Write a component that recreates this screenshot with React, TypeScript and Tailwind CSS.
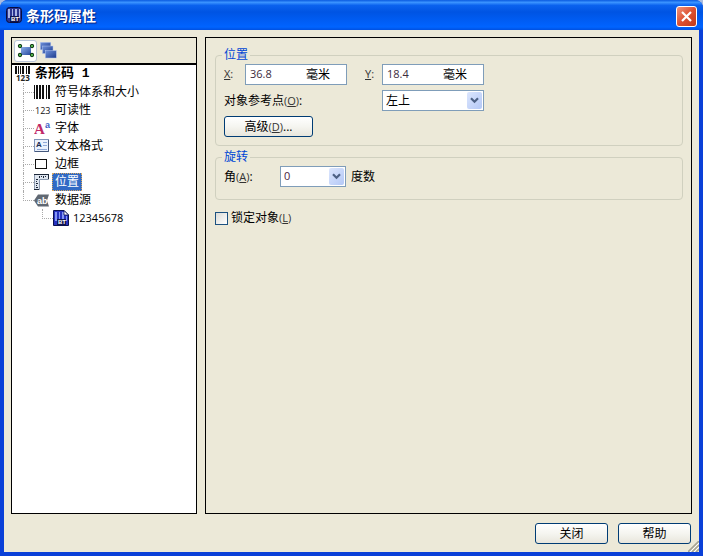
import { useState, type ReactNode } from "react"
import clsx from "clsx"

const UI_FONT = "font-['Open_Sans','Noto_Sans_CJK_SC',sans-serif]"

function BarTenderIcon({ page = false }: { page?: boolean }) {
    return (
        <svg width="16" height="16" viewBox="0 0 16 16" aria-hidden="true" className="shrink-0">
            {page ? (
                <path d="M0.5 0.5H11L15.5 5V15.5H0.5Z" fill="#2733c0" stroke="#0a1050" />
            ) : (
                <rect x="0.5" y="0.5" width="15" height="15" rx="3" fill="#2a3490" stroke="#080c3c" />
            )}
            <path d="M2 2h2v9h-2zM6 2h1v7h-1zM9 2h2v7h-2zM13 6h1v5h-1z" fill={page ? "#8496f4" : "#a9b4e4"} />
            {page ? (
                <path d="M11 0.5V5H15.5Z" fill="#fff" stroke="#0a1050" strokeWidth="0.8" />
            ) : (
                <path d="M13 2h1v4h-1z" fill="#a9b4e4" />
            )}
            <rect x="4" y="9" width="9" height="6" fill="#101450" />
            <text x="5" y="14" fontSize="6" fontWeight="bold" fill="#fff" fontFamily="Liberation Sans, sans-serif">
                BT
            </text>
        </svg>
    )
}

function ObjectIcon() {
    return (
        <svg width="18" height="14" viewBox="0 0 18 14" aria-hidden="true">
            <defs>
                <linearGradient id="objectFill" x1="0" y1="0" x2="1" y2="1">
                    <stop offset="0" stopColor="#8fb0ec" />
                    <stop offset="1" stopColor="#24479c" />
                </linearGradient>
            </defs>
            <path d="M4 3h10v8h-10z" fill="url(#objectFill)" />
            {[[3, 2], [15, 2], [3, 11], [15, 11]].map(([x, y]) => (
                <circle key={`${x}-${y}`} cx={x} cy={y} r="1.6" fill="#5ccc58" stroke="#123c18" strokeWidth="1.1" />
            ))}
        </svg>
    )
}

function StackIcon() {
    return (
        <svg width="17" height="17" viewBox="0 0 17 17" aria-hidden="true">
            <defs>
                <linearGradient id="stackFill" x1="0" y1="0" x2="1" y2="1">
                    <stop offset="0" stopColor="#6f92dc" />
                    <stop offset="1" stopColor="#1c3a8c" />
                </linearGradient>
            </defs>
            <g fill="url(#stackFill)" stroke="#b4c6ee" strokeWidth="0.5">
                <rect x="0.3" y="0.3" width="10.5" height="7.5" />
                <rect x="2.5" y="4" width="10.5" height="7.5" />
                <rect x="5.3" y="8.5" width="11" height="7.5" />
            </g>
        </svg>
    )
}

function RootIcon() {
    return (
        <svg width="17" height="16" viewBox="0 0 17 16" aria-hidden="true" className="shrink-0">
            <path d="M1 0h2v8h-2zM4 0h1v8h-1zM6 0h1v8h-1zM8 0h2v8h-2zM12 0h1v8h-1zM14 0h2v8h-2z" fill="#111" />
            <text x="2" y="15" fontSize="8" fontWeight="bold" fill="#222" fontFamily="Open Sans, sans-serif">
                123
            </text>
        </svg>
    )
}

function BarsIcon() {
    return (
        <svg width="16" height="14" viewBox="0 0 16 14" aria-hidden="true">
            <path d="M0 0h1v14h-1zM2 0h2v14h-2zM5 0h2v14h-2zM8 0h2v14h-2zM12 0h1v14h-1zM14 0h2v14h-2z" fill="#111" />
        </svg>
    )
}

function DigitsIcon() {
    return (
        <svg width="18" height="14" viewBox="0 0 18 14" aria-hidden="true" className="shrink-0">
            <text x="1" y="11" fontSize="9" fill="#111" fontFamily="Open Sans, sans-serif">
                123
            </text>
        </svg>
    )
}

function FontIcon() {
    return (
        <svg width="18" height="18" viewBox="0 0 18 18" aria-hidden="true" className="shrink-0">
            <text x="0" y="15" fontSize="15" fontWeight="bold" fill="#c02868" fontFamily="Liberation Serif, serif">
                A
            </text>
            <text x="11" y="9" fontSize="9" fontWeight="bold" fill="#3f62c8" fontFamily="Liberation Sans, sans-serif">
                a
            </text>
        </svg>
    )
}

function TextFormatIcon() {
    return (
        <svg width="16" height="14" viewBox="0 0 16 14" aria-hidden="true">
            <rect x="0.5" y="0.5" width="14" height="12" fill="#eaf1fc" stroke="#7f93b8" />
            <path d="M1 12.5H14.5V1" fill="none" stroke="#44587c" />
            <path d="M9 3.5h4M9 6.5h4M3 10.5h10" stroke="#8fa9d8" />
            <text x="2" y="8" fontSize="8" fontWeight="bold" fill="#1c2c50" fontFamily="Liberation Sans, sans-serif">
                A
            </text>
        </svg>
    )
}

function BorderIcon() {
    return (
        <svg width="16" height="14" viewBox="0 0 16 14" aria-hidden="true">
            <rect x="1.5" y="2.5" width="11" height="9" fill="#fff" stroke="#111" />
        </svg>
    )
}

function RulerIcon() {
    return (
        <svg width="16" height="16" viewBox="0 0 16 16" aria-hidden="true">
            <path d="M0.5 0.5H14.5V5.5H5.5V15.5H0.5Z" fill="#dfe6f0" stroke="#8b99ae" />
            <path d="M0 0.5H15M14.5 0V5M0 15.5H5" stroke="#1c2738" />
            <path d="M5.5 2v2M7.5 2v1M9.5 2v2M11.5 2v1M2 5.5h2M2 7.5h1M2 9.5h2M2 11.5h1M2 13.5h2" stroke="#1c2738" />
        </svg>
    )
}

function DataIcon() {
    return (
        <svg width="16" height="13" viewBox="0 0 16 13" aria-hidden="true">
            <path d="M4 0.5H15L13 6.5L15 12.5H4L0 6.5Z" fill="#606872" />
            <text x="3" y="10" fontSize="9" fontWeight="bold" fill="#fff" fontFamily="Liberation Sans, sans-serif">
                ab
            </text>
        </svg>
    )
}

interface TreeEntry {
    name: string
    icon: ReactNode
}

const entries: TreeEntry[] = [
    { name: "符号体系和大小", icon: <BarsIcon /> },
    { name: "可读性", icon: <DigitsIcon /> },
    { name: "字体", icon: <FontIcon /> },
    { name: "文本格式", icon: <TextFormatIcon /> },
    { name: "边框", icon: <BorderIcon /> },
    { name: "位置", icon: <RulerIcon /> },
    { name: "数据源", icon: <DataIcon /> },
]

function Branch({ last = false }: { last?: boolean }) {
    return (
        <span className="flex flex-col w-[11px] h-full shrink-0" aria-hidden="true">
            <span className="h-[10px] border-l border-b border-dotted border-[#aaa]" />
            {!last && <span className="flex-1 border-l border-dotted border-[#aaa]" />}
        </span>
    )
}

function ObjectTree() {
    const [selected, setSelected] = useState("位置")

    return (
        <ul>
            <li className="flex items-center gap-1 h-[18px] pl-[2px] text-[13px] font-bold">
                <RootIcon />
                <span className="font-['Liberation_Mono','Noto_Sans_CJK_SC',monospace]">条形码 1</span>
            </li>
            {entries.map((entry, i) => (
                <li key={entry.name} className="flex items-center h-[18px] pl-[11px]">
                    <Branch last={i === entries.length - 1} />
                    <span className="flex items-center w-[18px] shrink-0">{entry.icon}</span>
                    <button
                        onClick={() => setSelected(entry.name)}
                        className={clsx(
                            "h-[18px] px-[2px] border border-dotted leading-[16px]",
                            selected === entry.name ? "bg-[#316ac5] text-white border-[#d8a860]" : "border-transparent"
                        )}
                    >
                        {entry.name}
                    </button>
                </li>
            ))}
            <li className="flex items-center h-[18px] pl-[30px]">
                <Branch last />
                <BarTenderIcon page />
                <button className="pl-1 text-[11px]">12345678</button>
            </li>
        </ul>
    )
}

function DropArrow() {
    return (
        <span className="absolute right-[2px] inset-y-[2px] w-[15px] flex items-center justify-center rounded-[2px] bg-gradient-to-br from-[#dce6fd] to-[#b4c8f6] pointer-events-none">
            <svg width="9" height="7" viewBox="0 0 9 7" aria-hidden="true">
                <path d="M1 1.2L4.5 4.7L8 1.2" fill="none" stroke="#4d6185" strokeWidth="2.2" />
            </svg>
        </span>
    )
}

function Combo({ id, options, className }: { id: string; options: string[]; className: string }) {
    return (
        <span className={clsx("relative h-[21px]", className)}>
            <select id={id} className="appearance-none block w-full h-full pl-[3px] bg-white border border-[#7f9db9] outline-none">
                {options.map((option) => (
                    <option key={option}>{option}</option>
                ))}
            </select>
            <DropArrow />
        </span>
    )
}

function Measure({ id, value }: { id: string; value: string }) {
    return (
        <span className="flex items-center w-[102px] h-[21px] bg-white border border-[#7f9db9]">
            <input id={id} defaultValue={value} className="w-[60px] pl-1 text-[11px] text-[#3c2c3c] outline-none" />
            <span>毫米</span>
        </span>
    )
}

function Group({ title, className, children }: { title: string; className: string; children: ReactNode }) {
    return (
        <fieldset className={clsx("border border-[#d0d0bf] rounded-[4px] px-2", className)}>
            <legend className="-ml-[2px] px-[2px] leading-[12px] text-[#0046d5]">{title}</legend>
            {children}
        </fieldset>
    )
}

function Key({ children }: { children: string }) {
    return (
        <span className="text-[11px] text-[#333]">
            (<u className="underline-offset-1">{children}</u>)
        </span>
    )
}

function PushButton({ className, children }: { className: string; children: ReactNode }) {
    return (
        <button
            className={clsx(
                "h-[21px] leading-[18px] border border-[#003c74] rounded-[3px] bg-gradient-to-b from-white via-[#f5f5f0] to-[#e8e6dc]",
                className
            )}
        >
            {children}
        </button>
    )
}

export default function App() {
    return (
        <div className="min-h-screen flex bg-[#a9bce0]">
            <div className={clsx("flex-1 flex flex-col bg-[#0a40d8] rounded-t-[8px] text-[12px] text-black", UI_FONT)}>
                <header className="flex items-center h-[30px] px-[6px] rounded-t-[8px] bg-[linear-gradient(to_bottom,#0a5be0_0%,#3a93ff_8%,#0a62ee_18%,#0054e3_40%,#0060fa_80%,#0064ff_90%,#0050e0_100%)]">
                    <BarTenderIcon />
                    <h1 className="flex-1 pl-[4px] text-[14px] font-bold text-white [text-shadow:1px_1px_1px_#0a1f78]">条形码属性</h1>
                    <button
                        aria-label="关闭窗口"
                        className="flex items-center justify-center w-[21px] h-[21px] mt-[3px] rounded-[3px] border border-white bg-gradient-to-br from-[#f0937a] via-[#dc5030] to-[#c03a18]"
                    >
                        <svg width="11" height="11" viewBox="0 0 11 11" aria-hidden="true">
                            <path d="M1 1L10 10M10 1L1 10" stroke="#fff" strokeWidth="2.2" />
                        </svg>
                    </button>
                </header>

                <div className="relative flex-1 flex flex-col mx-1 mb-1 pt-[7px] px-[7px] pb-2 bg-[#ece9d8]">
                    <div className="flex-1 flex gap-2">
                        <nav className="w-[186px] shrink-0 border border-black bg-white">
                            <div className="flex items-center gap-[3px] h-[27px] pl-[2px] bg-[#ece9d8] border-b-2 border-black">
                                <button
                                    aria-label="对象"
                                    className="flex items-center justify-center w-[23px] h-[22px] rounded-[3px] border border-[#b8c4d8] bg-white"
                                >
                                    <ObjectIcon />
                                </button>
                                <button aria-label="图层">
                                    <StackIcon />
                                </button>
                            </div>
                            <ObjectTree />
                        </nav>

                        <main className="flex-1 min-w-0 border border-black pt-[11px] pl-[9px] pr-2">
                            <Group title="位置" className="pt-[3px] pb-2">
                                <div className="flex flex-col gap-[5px]">
                                    <div className="flex items-center">
                                        <label htmlFor="pos-x" className="w-[21px] text-[11px] text-[#333]">
                                            <u>X</u>:
                                        </label>
                                        <Measure id="pos-x" value="36.8" />
                                        <label htmlFor="pos-y" className="w-[35px] pl-[18px] text-[11px] text-[#333]">
                                            <u>Y</u>:
                                        </label>
                                        <Measure id="pos-y" value="18.4" />
                                    </div>
                                    <div className="flex items-center">
                                        <label htmlFor="anchor" className="w-[158px]">
                                            对象参考点<Key>O</Key>:
                                        </label>
                                        <Combo id="anchor" options={["左上", "右上", "左下", "右下"]} className="w-[102px]" />
                                    </div>
                                    <PushButton className="w-[89px]">
                                        高级<Key>D</Key>...
                                    </PushButton>
                                </div>
                            </Group>

                            <Group title="旋转" className="mt-[5px] pt-[3px] pb-3">
                                <div className="flex items-center">
                                    <label htmlFor="angle" className="w-[56px]">
                                        角<Key>A</Key>:
                                    </label>
                                    <Combo id="angle" options={["0", "90", "180", "270"]} className="w-[66px] text-[11px] text-[#4c1c3c]" />
                                    <span className="pl-[5px]">度数</span>
                                </div>
                            </Group>

                            <label className="flex items-center gap-[3px] mt-[9px]">
                                <input
                                    type="checkbox"
                                    className="appearance-none w-[13px] h-[13px] border border-[#1c5180] bg-gradient-to-br from-[#dcdcd7] to-white checked:from-[#316ac5] checked:to-[#316ac5]"
                                />
                                <span>
                                    锁定对象<Key>L</Key>
                                </span>
                            </label>
                        </main>
                    </div>

                    <footer className="flex justify-end gap-[10px] pt-[9px] pr-[1px]">
                        <PushButton className="w-[73px]">关闭</PushButton>
                        <PushButton className="w-[73px]">帮助</PushButton>
                    </footer>

                    <svg width="11" height="11" viewBox="0 0 11 11" aria-hidden="true" className="absolute right-0 bottom-0">
                        <path d="M0 11L11 0M4 11L11 4M8 11L11 8" stroke="#a7a493" strokeWidth="1.6" />
                        <path d="M2 11L11 2M6 11L11 6" stroke="#fff" />
                    </svg>
                </div>
            </div>
        </div>
    )
}
